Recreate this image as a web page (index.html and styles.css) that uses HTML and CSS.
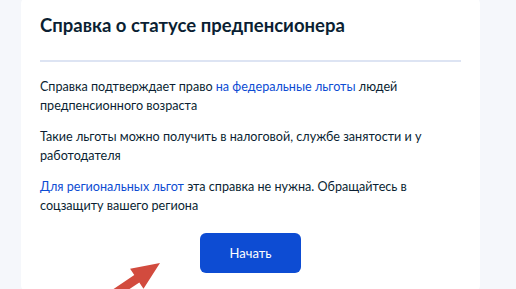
FILE: index.html
```html
<!DOCTYPE html>
<html lang="ru">
<head>
    <meta charset="UTF-8">
    <meta name="viewport" content="width=device-width, initial-scale=1.0">
    <title>Справка о статусе предпенсионера</title>
    <link rel="stylesheet" href="styles.css">
</head>
<body>
    <div class="page">
        <div class="card">
            <h1 class="title">Справка о статусе предпенсионера</h1>
            <div class="divider"></div>
            <p>Справка подтверждает право <a href="#">на федеральные льготы</a> людей предпенсионного возраста</p>
            <p>Такие льготы можно получить в налоговой, службе занятости и у работодателя</p>
            <p><a href="#">Для региональных льгот</a> эта справка не нужна. Обращайтесь в соцзащиту вашего региона</p>
            <div class="actions">
                <button class="btn">Начать</button>
            </div>
        </div>
    </div>

    <!-- red pointer arrow drawn over the screenshot -->
    <svg class="pointer" width="516" height="289" viewBox="0 0 516 289">
        <polygon points="160,263 130.1,268.7 134.3,275 92.8,303 97.8,310.4 139.3,282.4 143.5,288.7" fill="#d24b3e"/>
    </svg>
</body>
</html>
```

FILE: styles.css
```css
* {
    box-sizing: border-box;
}

body {
    margin: 0;
    height: 289px;
    overflow: hidden;
    font-family: 'Lato', 'Noto Sans', sans-serif;
    background-color: #f5f7fb;
    color: #0b1f33;
}

.page {
    padding-left: 21px;
}

.card {
    width: 459px;
    margin-top: -4px;
    padding: 16px 19px 20px 19px;
    background: #ffffff;
    border-radius: 8px;
}

.title {
    margin: 0;
    font-size: 18.5px;
    line-height: 26px;
    font-weight: 700;
}

.divider {
    height: 2px;
    margin: 22px 0 15px;
    background-color: #dde4f3;
}

.card p {
    margin: 0 0 12px;
    font-size: 12.6px;
    line-height: 19px;
}

.card a {
    color: #0d4cd3;
    text-decoration: none;
}

.actions {
    display: flex;
    justify-content: center;
    padding-top: 6px;
}

.btn {
    width: 101px;
    height: 40px;
    border: none;
    border-radius: 6px;
    background-color: #0d4cd3;
    color: #ffffff;
    font-family: 'Lato', sans-serif;
    font-size: 13px;
    cursor: pointer;
}

.pointer {
    position: absolute;
    left: 0;
    top: 0;
    pointer-events: none;
}
```
